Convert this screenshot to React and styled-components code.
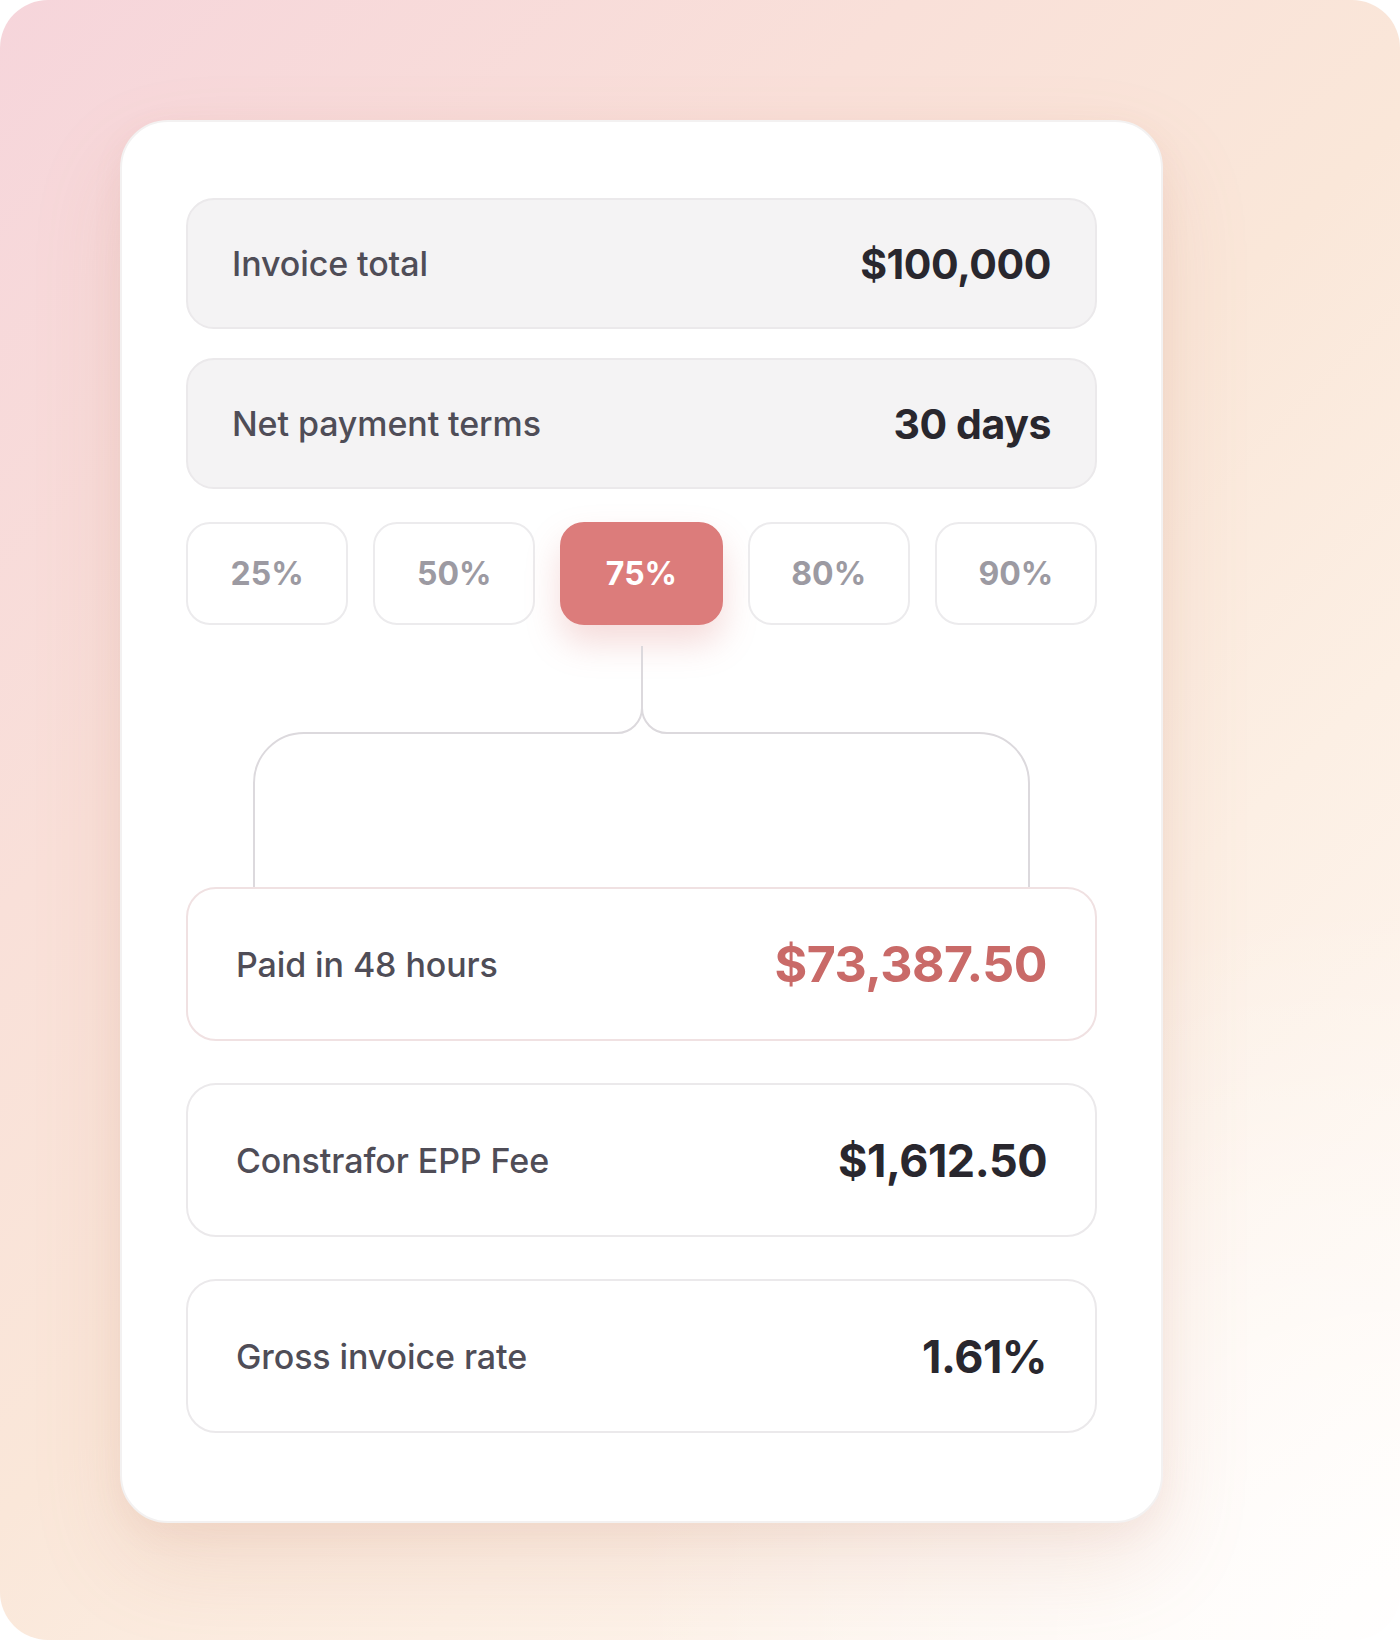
import React, { useState } from 'react';
import styled, { createGlobalStyle } from 'styled-components';

const GlobalStyle = createGlobalStyle`
  body {
    margin: 0;
    background: #ffffff;
    font-family: Inter, "Noto Sans", sans-serif;
    -webkit-font-smoothing: antialiased;
  }
`;

const Canvas = styled.div`
  width: 1400px;
  height: 1640px;
  box-sizing: border-box;
  padding: 120px 0 0 120px;
  border-radius: 48px;
  overflow: hidden;
  background:
    radial-gradient(ellipse 55% 45% at 100% 100%, rgba(255, 255, 255, 0.9), rgba(255, 255, 255, 0) 100%),
    linear-gradient(135deg, #f6d5db 0%, #f9e0d9 30%, #fae7d9 50%, #fcefe4 68%, #fffaf6 100%);
`;

const Card = styled.div`
  width: 1043px;
  box-sizing: border-box;
  padding: 76px 64px 88px;
  background: #ffffff;
  border: 2px solid #f3f1f1;
  border-radius: 48px;
  box-shadow: 0 40px 90px rgba(196, 128, 104, 0.16), 0 10px 30px rgba(196, 128, 104, 0.08);
`;

const InputRow = styled.div`
  display: flex;
  align-items: center;
  justify-content: space-between;
  height: 131px;
  box-sizing: border-box;
  padding: 0 44px;
  margin-bottom: ${(props) => props.gap || 0}px;
  background: #f4f3f4;
  border: 2px solid #ebe9eb;
  border-radius: 28px;
`;

const Label = styled.span`
  font-size: 34px;
  font-weight: 500;
  color: #4f4d57;
  letter-spacing: -0.1px;
`;

const InputValue = styled.span`
  font-size: 41px;
  font-weight: 700;
  color: #29272e;
  letter-spacing: -0.4px;
`;

const PillRow = styled.div`
  display: grid;
  grid-template-columns: repeat(5, 1fr);
  gap: 25px;
`;

const Pill = styled.button`
  height: 103px;
  box-sizing: border-box;
  padding: 0;
  border-radius: 24px;
  border: 2px solid ${(props) => (props.active ? '#dc7c7b' : '#ecebed')};
  background: ${(props) => (props.active ? '#dc7c7b' : '#ffffff')};
  color: ${(props) => (props.active ? '#ffffff' : '#9c9aa2')};
  box-shadow: ${(props) => (props.active ? '0 18px 34px rgba(220, 124, 123, 0.28)' : 'none')};
  font-family: Inter, "Noto Sans", sans-serif;
  font-size: 32px;
  font-weight: 700;
  cursor: pointer;
`;

const Connector = styled.svg`
  display: block;
  width: 911px;
  height: 262px;
`;

const ResultList = styled.div`
  display: flex;
  flex-direction: column;
  gap: 42px;
`;

const ResultCard = styled.div`
  display: flex;
  align-items: center;
  justify-content: space-between;
  height: 154px;
  box-sizing: border-box;
  padding: 0 48px;
  background: #ffffff;
  border: 2px solid ${(props) => (props.highlight ? '#f0e1e2' : '#ebe9eb')};
  border-radius: 30px;
`;

const ResultValue = styled.span`
  font-size: ${(props) => (props.highlight ? 50 : 45)}px;
  font-weight: 700;
  letter-spacing: -0.5px;
  color: ${(props) => (props.highlight ? '#c96a68' : '#29272e')};
`;

const rates = ['25%', '50%', '75%', '80%', '90%'];

const results = [
  { label: 'Paid in 48 hours', value: '$73,387.50', highlight: true },
  { label: 'Constrafor EPP Fee', value: '$1,612.50' },
  { label: 'Gross invoice rate', value: '1.61%' },
];

const App = () => {
  const [selected, setSelected] = useState(2);

  return (
    <>
      <GlobalStyle />
      <Canvas>
        <Card>
          <InputRow gap={29}>
            <Label>Invoice total</Label>
            <InputValue>$100,000</InputValue>
          </InputRow>
          <InputRow gap={33}>
            <Label>Net payment terms</Label>
            <InputValue>30 days</InputValue>
          </InputRow>

          <PillRow>
            {rates.map((rate, index) => (
              <Pill key={rate} active={index === selected} onClick={() => setSelected(index)}>
                {rate}
              </Pill>
            ))}
          </PillRow>

          {/* brace running from the chosen rate down into the result cards */}
          <Connector viewBox="0 0 911 262" fill="none">
            <path
              d="M456 21 V83 A25 25 0 0 1 431 108 H118 A50 50 0 0 0 68 158 V262"
              stroke="#dcd9dd"
              strokeWidth="2"
            />
            <path
              d="M456 83 A25 25 0 0 0 481 108 H793 A50 50 0 0 1 843 158 V262"
              stroke="#dcd9dd"
              strokeWidth="2"
            />
          </Connector>

          <ResultList>
            {results.map((item) => (
              <ResultCard key={item.label} highlight={item.highlight}>
                <Label>{item.label}</Label>
                <ResultValue highlight={item.highlight}>{item.value}</ResultValue>
              </ResultCard>
            ))}
          </ResultList>
        </Card>
      </Canvas>
    </>
  );
};

export default App;
